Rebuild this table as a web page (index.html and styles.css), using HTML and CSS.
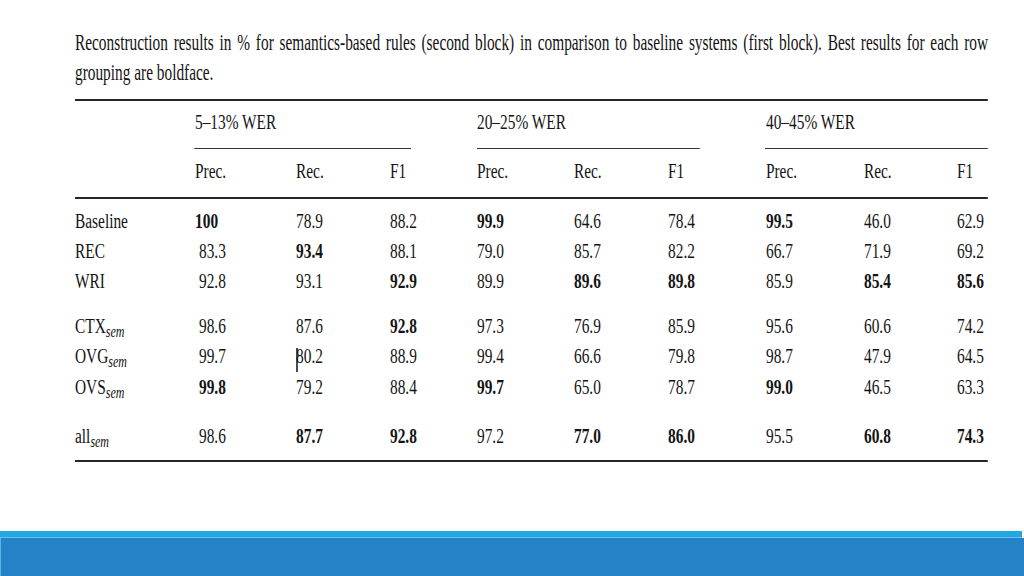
FILE: index.html
```html
<!DOCTYPE html>
<html lang="en">
<head>
<meta charset="utf-8">
<title>Reconstruction results</title>
<link rel="stylesheet" href="styles.css">
</head>
<body>
<main class="slide">
  <p class="caption">Reconstruction results in % for semantics-based rules (second block) in comparison to baseline systems (first block). Best results for each row grouping are boldface.</p>
  <div class="table">
    <div class="groups">
      <div class="grp grp1">5–13% WER</div>
      <div class="grp grp2">20–25% WER</div>
      <div class="grp grp3">40–45% WER</div>
    </div>
    <div class="row head">
      <span></span><span>Prec.</span><span>Rec.</span><span>F1</span><span>Prec.</span><span>Rec.</span><span>F1</span><span>Prec.</span><span>Rec.</span><span>F1</span>
    </div>
    <div class="block first">
      <div class="row data">
        <span>Baseline</span><span class="b wide">100</span><span>78.9</span><span>88.2</span><span class="b">99.9</span><span>64.6</span><span>78.4</span><span class="b">99.5</span><span>46.0</span><span>62.9</span>
      </div>
      <div class="row data">
        <span>REC</span><span>83.3</span><span class="b">93.4</span><span>88.1</span><span>79.0</span><span>85.7</span><span>82.2</span><span>66.7</span><span>71.9</span><span>69.2</span>
      </div>
      <div class="row data">
        <span>WRI</span><span>92.8</span><span>93.1</span><span class="b">92.9</span><span>89.9</span><span class="b">89.6</span><span class="b">89.8</span><span>85.9</span><span class="b">85.4</span><span class="b">85.6</span>
      </div>
    </div>
    <div class="block second">
      <div class="row data">
        <span>CTX<sub>sem</sub></span><span>98.6</span><span>87.6</span><span class="b">92.8</span><span>97.3</span><span>76.9</span><span>85.9</span><span>95.6</span><span>60.6</span><span>74.2</span>
      </div>
      <div class="row data">
        <span>OVG<sub>sem</sub></span><span>99.7</span><span><i class="caret"></i>80.2</span><span>88.9</span><span>99.4</span><span>66.6</span><span>79.8</span><span>98.7</span><span>47.9</span><span>64.5</span>
      </div>
      <div class="row data">
        <span>OVS<sub>sem</sub></span><span class="b">99.8</span><span>79.2</span><span>88.4</span><span class="b">99.7</span><span>65.0</span><span>78.7</span><span class="b">99.0</span><span>46.5</span><span>63.3</span>
      </div>
    </div>
    <div class="block third">
      <div class="row data">
        <span>all<sub>sem</sub></span><span>98.6</span><span class="b">87.7</span><span class="b">92.8</span><span>97.2</span><span class="b">77.0</span><span class="b">86.0</span><span>95.5</span><span class="b">60.8</span><span class="b">74.3</span>
      </div>
    </div>
  </div>
</main>
<footer class="bar">
  <div class="bar-top"></div>
  <div class="bar-main"></div>
</footer>
</body>
</html>
```

FILE: styles.css
```css
html, body {
  margin: 0;
  padding: 0;
}

body {
  width: 1024px;
  height: 576px;
  overflow: hidden;
  background: #ffffff;
  color: #141414;
  font-family: "Liberation Serif", "Times New Roman", serif;
  display: flex;
  flex-direction: column;
}

.slide {
  flex: 1;
  padding: 28px 0 0 75px;
  min-height: 0;
}

.caption {
  margin: 0;
  width: 1369px;
  font-size: 23px;
  line-height: 30px;
  text-align: justify;
  transform: scaleX(0.667);
  transform-origin: 0 0;
}

.table {
  margin-top: 11px;
  width: 1217.3px;
  font-size: 20.5px;
  line-height: 30px;
  border-top: 2px solid #262626;
  border-bottom: 2px solid #262626;
  padding-bottom: 9px;
  transform: scaleX(0.75);
  transform-origin: 0 0;
  white-space: nowrap;
}

.groups {
  display: flex;
  padding-top: 6.4px;
}

.grp {
  width: 297.3px;
  padding-bottom: 10.6px;
  border-bottom: 1px solid #333333;
}

.grp1 {
  margin-left: 158.7px;
  width: 288px;
  padding-left: 1.3px;
}

.grp2 {
  margin-left: 88px;
}

.grp3 {
  margin-left: 86.7px;
  width: 296px;
  padding-left: 1.3px;
}

.row {
  display: grid;
  grid-template-columns: 160px 134.7px 125.3px 116px 129.3px 125.4px 130.6px 130.7px 124px 41.3px;
}

.head {
  padding-top: 7.1px;
  padding-bottom: 10.9px;
  border-bottom: 2px solid #262626;
}

.data > span:nth-child(2) {
  padding-left: 5.3px;
}

.data > span.wide {
  padding-left: 0;
}

.block.first {
  padding-top: 7px;
}

.block.second {
  margin-top: 15px;
}

.block.third {
  margin-top: 19px;
}

.b {
  font-weight: bold;
}

sub {
  font-size: 16px;
  font-style: italic;
  line-height: 0;
  vertical-align: -3.5px;
}

.caret {
  display: inline-block;
  width: 0;
  height: 24px;
  border-left: 2px solid #111;
  margin-right: -2px;
  vertical-align: -9px;
}

.bar {
  height: 45px;
  display: flex;
  flex-direction: column;
}

.bar-top {
  height: 6px;
  margin-right: 2px;
  background: #22a7e1;
  border-bottom: 1px solid #6cc2ec;
}

.bar-main {
  flex: 1;
  background: #2682c6;
  border-left: 1px solid #5cb3e6;
}
```
